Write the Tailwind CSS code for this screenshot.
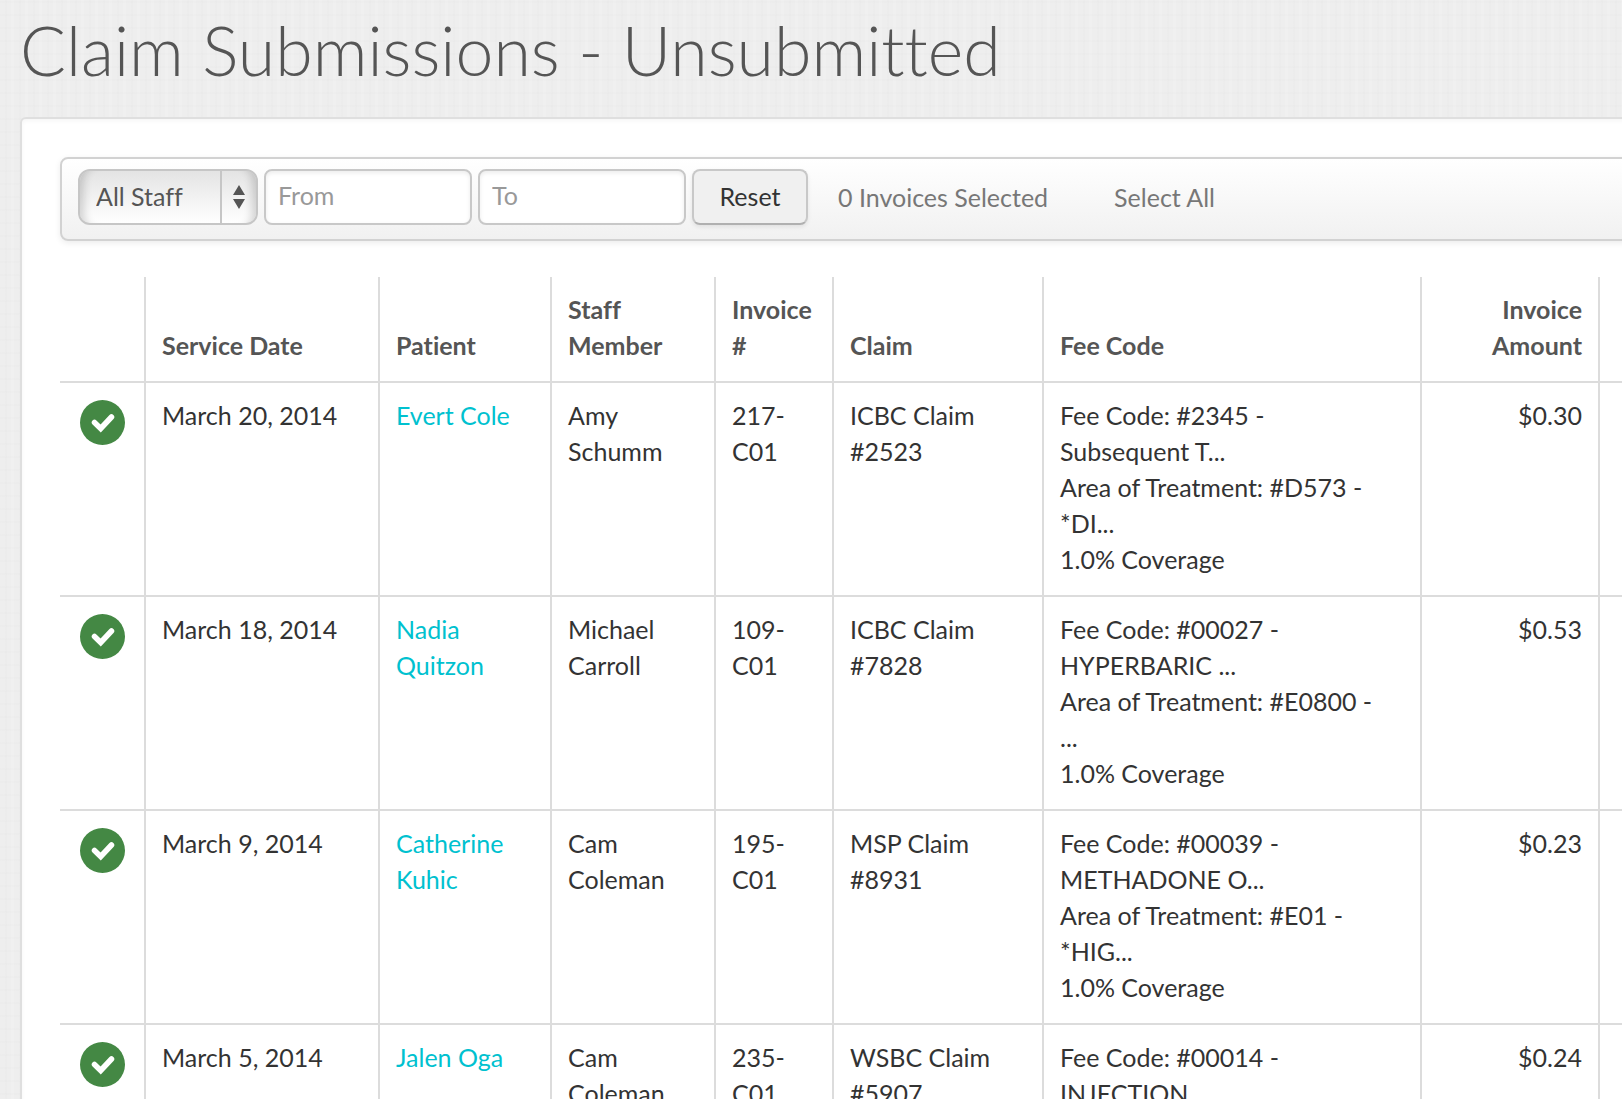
<!DOCTYPE html>
<html lang="en">
<head>
<meta charset="utf-8">
<title>Claim Submissions - Unsubmitted</title>
<script src="https://cdn.jsdelivr.net/npm/@tailwindcss/browser@4"></script>
</head>
<body class="h-screen overflow-hidden bg-[#eeeeee] bg-[repeating-linear-gradient(90deg,transparent_0px_5px,rgba(0,0,0,0.006)_5px_7px,transparent_7px_11px,rgba(255,255,255,0.12)_11px_14px),repeating-linear-gradient(0deg,transparent_0px_4px,rgba(0,0,0,0.006)_4px_6px,transparent_6px_13px)] font-['Lato',sans-serif] text-[25px] leading-9 text-[#333333] [font-variant-ligatures:none]">
<svg class="hidden" aria-hidden="true">
  <symbol id="check" viewBox="0 0 45 45">
    <circle cx="22.500" cy="22.500" r="22.500" fill="#448844"/>
    <path d="M14.500 22.500l6.200 6L31.500 17" fill="none" stroke="#fff" stroke-width="5.500" stroke-linecap="round" stroke-linejoin="miter"/>
  </symbol>
</svg>
<main>
  <h1 class="px-5 pt-[10px] pb-[27px] text-[68px] leading-[80px] font-light whitespace-nowrap text-[#555555]">Claim Submissions - Unsubmitted</h1>
  <section class="ml-5 -mr-16 rounded-md border-2 border-[#dfdfdf] bg-white p-[38px] shadow-[inset_0_2px_4px_rgba(0,0,0,0.04)]">
    <form class="mb-9 flex items-start gap-[6px] rounded-lg border-2 border-[#d2d2d2] bg-linear-to-b from-white to-[#f1f1f1] px-4 pt-[10px] pb-[14px] shadow-[0_2px_6px_rgba(0,0,0,0.08)]">
      <div class="relative">
        <select aria-label="Staff" class="h-14 w-[180px] appearance-none rounded-xl border-2 border-[#c6c6c6] bg-linear-to-b from-[#e4e4e4] to-white pb-[2px] pl-4 text-[#555555] shadow-[inset_12px_0_8px_-8px_rgba(0,0,0,0.16),inset_-12px_0_8px_-8px_rgba(0,0,0,0.16)]">
          <option>All Staff</option>
        </select>
        <span class="pointer-events-none absolute inset-y-[2px] right-[2px] flex w-[36px] items-center justify-center border-l-2 border-[#c6c6c6]">
          <svg class="h-6 w-3" viewBox="0 0 12 24" fill="#555" aria-hidden="true"><path d="M6 0l6 10H0zM6 24L0 14h12z"/></svg>
        </span>
      </div>
      <input type="text" aria-label="From" placeholder="From" class="h-14 w-[208px] rounded-lg border-2 border-[#c8c8c8] bg-white px-3 pb-1 shadow-[inset_0_2px_4px_rgba(0,0,0,0.08)] placeholder:text-[#999999]">
      <input type="text" aria-label="To" placeholder="To" class="h-14 w-[208px] rounded-lg border-2 border-[#c8c8c8] bg-white px-3 pb-1 shadow-[inset_0_2px_4px_rgba(0,0,0,0.08)] placeholder:text-[#999999]">
      <button type="reset" class="h-14 w-[116px] rounded-lg border-2 border-[#c8c8c8] border-b-[#b0b0b0] bg-[#f0f0f0] pb-[2px] shadow-[0_2px_4px_rgba(0,0,0,0.08)]">Reset</button>
      <p class="ml-6 pt-[10px] text-[#777777]">0 Invoices Selected</p>
      <a href="#" class="ml-[60px] pt-[10px] text-[#777777]">Select All</a>
    </form>
    <table class="w-full table-fixed border-separate border-spacing-0 [&_td]:border-t-2 [&_td]:border-[#dcdcdc] [&_td]:px-4 [&_td]:pt-[14px] [&_td]:pb-[18px] [&_td]:align-top [&_td]:whitespace-nowrap [&_td:not(:first-child)]:border-l-2 [&_th]:border-[#dcdcdc] [&_th]:px-4 [&_th]:pt-[14px] [&_th]:pb-[18px] [&_th]:text-left [&_th]:align-bottom [&_th]:font-bold [&_th]:whitespace-nowrap [&_th]:text-[#555555] [&_th:not(:first-child)]:border-l-2">
      <colgroup>
        <col class="w-[84px]"><col class="w-[234px]"><col class="w-[172px]"><col class="w-[164px]"><col class="w-[118px]"><col class="w-[210px]"><col class="w-[378px]"><col class="w-[178px]"><col>
      </colgroup>
      <thead>
        <tr>
          <th></th>
          <th>Service Date</th>
          <th>Patient</th>
          <th>Staff<br>Member</th>
          <th>Invoice<br>#</th>
          <th>Claim</th>
          <th>Fee Code</th>
          <th><div class="text-right">Invoice<br>Amount</div></th>
          <th></th>
        </tr>
      </thead>
      <tbody>
        <tr>
          <td><svg class="mx-auto mt-[3px] size-[45px]" role="img" aria-label="Ready"><use href="#check"/></svg></td>
          <td>March 20, 2014</td>
          <td><a href="#" class="text-[#00c1cf]">Evert Cole</a></td>
          <td>Amy<br>Schumm</td>
          <td>217-<br>C01</td>
          <td>ICBC Claim<br>#2523</td>
          <td>Fee Code: #2345 -<br>Subsequent T...<br>Area of Treatment: #D573 -<br>*DI...<br>1.0% Coverage</td>
          <td class="text-right">$0.30</td>
          <td></td>
        </tr>
        <tr>
          <td><svg class="mx-auto mt-[3px] size-[45px]" role="img" aria-label="Ready"><use href="#check"/></svg></td>
          <td>March 18, 2014</td>
          <td><a href="#" class="text-[#00c1cf]">Nadia<br>Quitzon</a></td>
          <td>Michael<br>Carroll</td>
          <td>109-<br>C01</td>
          <td>ICBC Claim<br>#7828</td>
          <td>Fee Code: #00027 -<br>HYPERBARIC ...<br>Area of Treatment: #E0800 -<br>...<br>1.0% Coverage</td>
          <td class="text-right">$0.53</td>
          <td></td>
        </tr>
        <tr>
          <td><svg class="mx-auto mt-[3px] size-[45px]" role="img" aria-label="Ready"><use href="#check"/></svg></td>
          <td>March 9, 2014</td>
          <td><a href="#" class="text-[#00c1cf]">Catherine<br>Kuhic</a></td>
          <td>Cam<br>Coleman</td>
          <td>195-<br>C01</td>
          <td>MSP Claim<br>#8931</td>
          <td>Fee Code: #00039 -<br>METHADONE O...<br>Area of Treatment: #E01 -<br>*HIG...<br>1.0% Coverage</td>
          <td class="text-right">$0.23</td>
          <td></td>
        </tr>
        <tr>
          <td><svg class="mx-auto mt-[3px] size-[45px]" role="img" aria-label="Ready"><use href="#check"/></svg></td>
          <td>March 5, 2014</td>
          <td><a href="#" class="text-[#00c1cf]">Jalen Oga</a></td>
          <td>Cam<br>Coleman</td>
          <td>235-<br>C01</td>
          <td>WSBC Claim<br>#5907</td>
          <td>Fee Code: #00014 -<br>INJECTION</td>
          <td class="text-right">$0.24</td>
          <td></td>
        </tr>
      </tbody>
    </table>
  </section>
</main>
</body>
</html>
